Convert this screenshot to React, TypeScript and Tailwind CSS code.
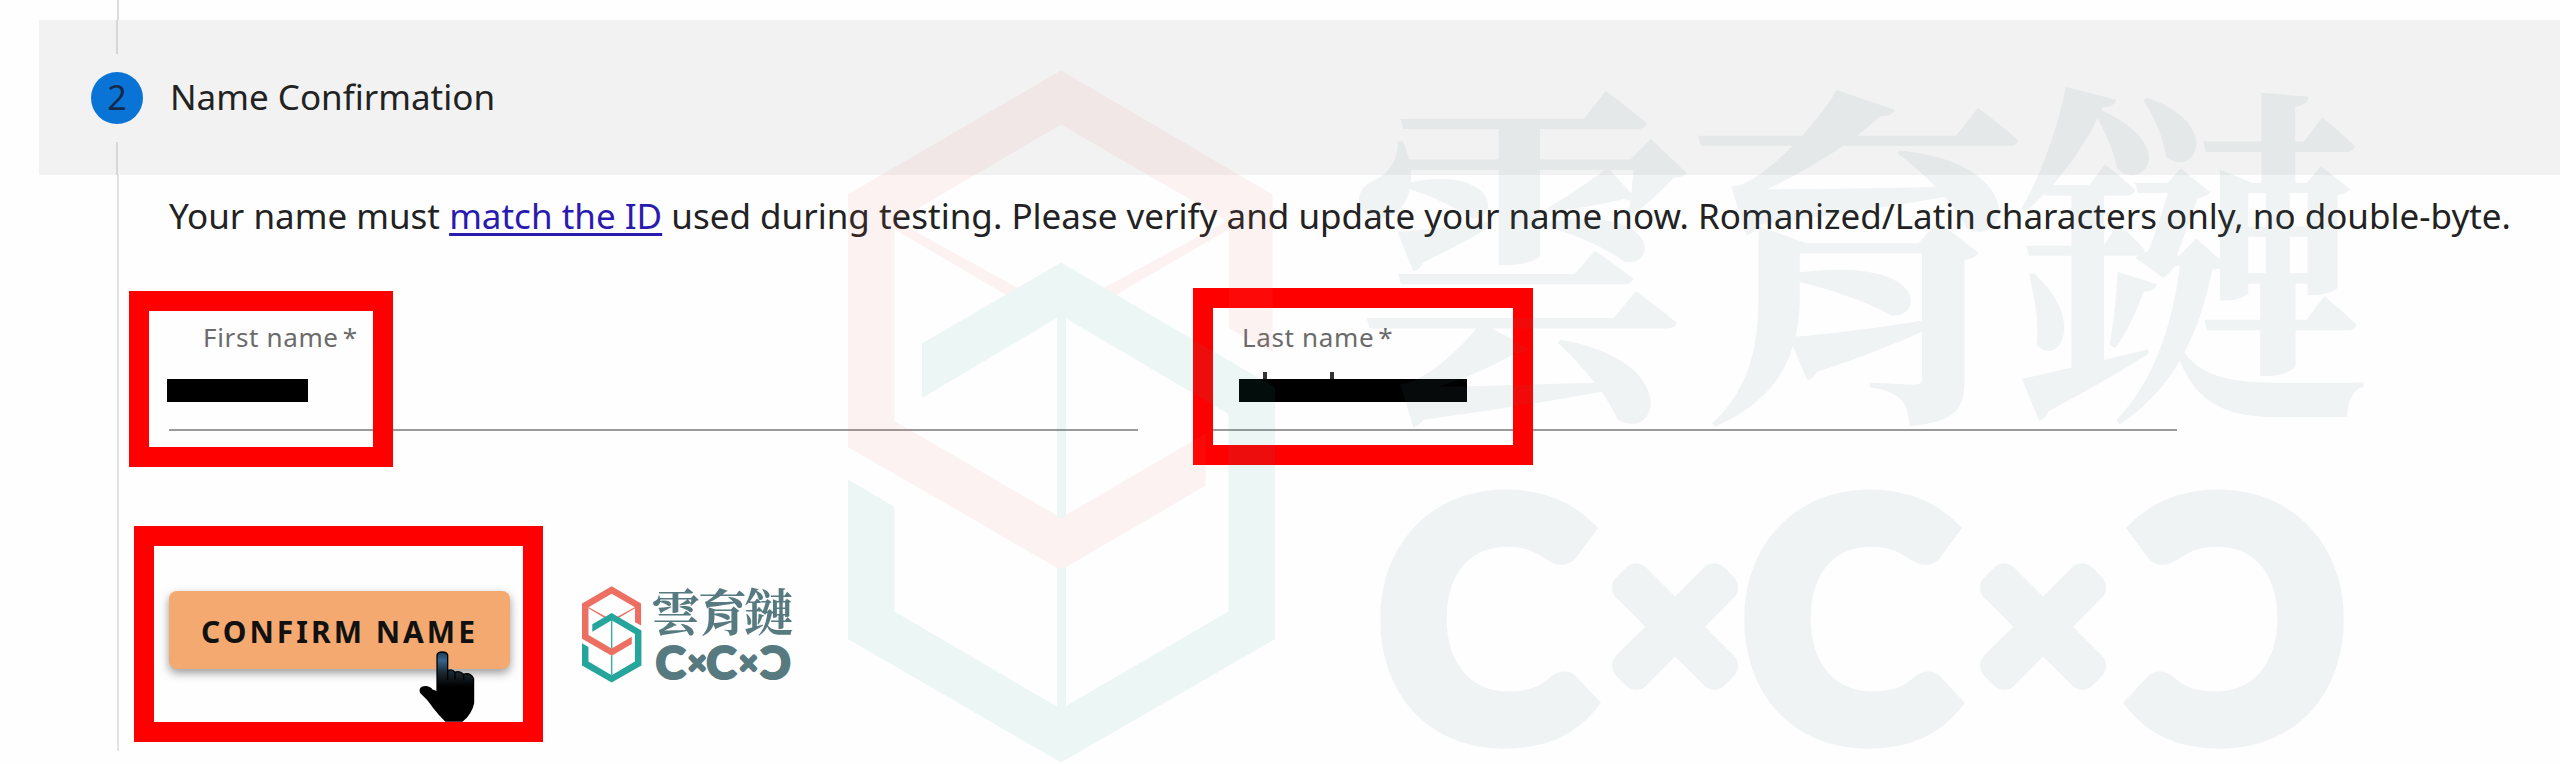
/**
 * NameConfirmationStep: step 2 of the profile stepper.
 *
 * The form sits under a large brand watermark. Red frames call out
 * the fields and the button, black bars redact the entered values.
 */
import type { ReactNode } from 'react';

function BrandLogo({ className }: { className?: string }) {
  return (
    <svg viewBox="848 70 1516 694" className={className} role="img" aria-label="雲育鏈 CxCxC">
      {/* Red ribbon */}
      <g fill="#ec6f62">
        <path d="M1061 70.5 1272.5 194.5V352L1229 328.5V222L1061 124.5 894.4 222V421L1061 518 1205.6 433.5V485.5L1061 570 848 447V194.5Z" />
        <path d="M894 220 1020 289 1008 296 894 229ZM1229 220 1102 289 1114 296 1229 229Z" />
      </g>
      {/* Teal ribbon */}
      <g fill="#25a59c">
        <path d="M922 343.5 1061 262.5 1275 387.5V639L1061 762.5 848 639V479.5L894.4 507V611.5L1061 709 1228.4 611.5V414L1061 315.5 922 398Z" />
        <path d="M1057 312H1066V518H1057ZM1057 568H1066V712H1057Z" />
      </g>
      {/* Word mark */}
      <g fill="#567a80" stroke="#567a80" strokeWidth="0" fontWeight="700">
        <text
          x="1342 1678 2012"
          y="395"
          fontSize="358"
          style={{ fontFamily: '"Noto Serif CJK TC", "Noto Sans CJK TC", serif' }}
        >
          雲育鏈
        </text>
        <g fontSize="328" fontWeight="900" strokeWidth="16" style={{ fontFamily: 'Lato, sans-serif' }}>
          <text x="1377" y="738">C</text>
          <text x="1741" y="738">C</text>
          <text x="-2347" y="738" transform="scale(-1 1)">C</text>
        </g>
        <g
          fontSize="218"
          fontWeight="300"
          textAnchor="middle"
          strokeWidth="29"
          strokeLinejoin="round"
          style={{ fontFamily: 'Inter, sans-serif' }}
        >
          <text x="1675" y="689">×</text>
          <text x="2043" y="689">×</text>
        </g>
      </g>
    </svg>
  );
}

function HandCursor({ className }: { className?: string }) {
  return (
    <svg viewBox="928 422 168 214" className={className} aria-hidden="true">
      <defs>
        <linearGradient id="hand" x1="0" y1="0" x2="0" y2="1">
          <stop offset="0" stopColor="#1c3a54" />
          <stop offset="0.12" stopColor="#35658f" />
          <stop offset="0.3" stopColor="#1a2730" />
          <stop offset="0.5" stopColor="#000" />
        </linearGradient>
      </defs>
      <path
        d="M982 434Q984 425 997 425 1011 425 1014 434V482Q1026 474 1036 486 1050 480 1062 492 1084 486 1092 506V578Q1086 610 1058 633H1008Q990 616 970 590 954 566 933 548 928 536 938 531 956 526 968 540L982 545Z"
        fill="url(#hand)"
        stroke="#000"
        strokeWidth="4"
      />
      <path d="M1014 482V510M1036 486V508M1062 492V510" stroke="#000" strokeWidth="4" />
    </svg>
  );
}

interface NameFieldProps {
  id: string;
  label: string;
  children: ReactNode;
}

function NameField({ id, label, children }: NameFieldProps) {
  return (
    <div className="relative w-[41%] max-w-[969px]">
      <label htmlFor={id} className="block pl-[34px] text-[26px] leading-9 tracking-wide text-[#6b6b6b]">
        {label}
        <span aria-hidden="true" className="ml-1">*</span>
      </label>
      <input
        id={id}
        type="text"
        required
        className="block h-[76px] w-full border-b-2 border-[#9a9a9a] bg-transparent text-4xl outline-none"
      />
      {children}
    </div>
  );
}

export default function App() {
  return (
    <main
      className="relative min-h-screen overflow-hidden bg-[#fefefe] pl-[39px] text-[#222]"
      style={{ fontFamily: '"Noto Sans", sans-serif' }}
    >
      <div className="ml-[78px] h-5 w-0.5 bg-[#dcdcdc]" />

      <header className="flex h-[155px] items-center gap-[27px] bg-[#f2f2f2] pl-[52px]">
        <div className="flex h-full flex-col items-center gap-[18px]">
          <div className="w-0.5 flex-1 bg-[#d6d6d6]" />
          <span className="flex size-[52px] items-center justify-center rounded-full bg-[#0a74d6] text-[34px] text-[#14294a]">
            2
          </span>
          <div className="w-0.5 flex-1 bg-[#d6d6d6]" />
        </div>
        <h2 className="text-[35px]">Name Confirmation</h2>
      </header>

      <section className="ml-[78px] h-[576px] border-l-2 border-[#e2e2e2] pl-[50px]">
        <p className="pt-4 text-[35px] leading-[50px] whitespace-nowrap">
          Your name must{' '}
          <a href="#id" className="text-[#2a1bb0] underline underline-offset-4">
            match the ID
          </a>{' '}
          used during testing. Please verify and update your name now. Romanized/Latin characters only, no double-byte.
        </p>

        <form>
          <div className="mt-[78px] flex gap-[70px]">
            <NameField id="first-name" label="First name">
              <div className="absolute top-[60px] -left-0.5 h-[23px] w-[141px] bg-black" />
              <div className="pointer-events-none absolute -top-7 -left-10 h-44 w-[264px] border-[20px] border-[#ff0000]" />
            </NameField>
            <NameField id="last-name" label="Last name">
              {/* Ascenders left above the redaction bar */}
              <div className="absolute top-[53px] left-[55px] flex h-2 w-[71px] justify-between">
                <span className="w-1 bg-[#333]" />
                <span className="w-1 bg-[#333]" />
              </div>
              <div className="absolute top-[60px] left-[31px] h-[23px] w-[228px] bg-black" />
              <div className="pointer-events-none absolute -top-[31px] -left-[15px] h-[177px] w-[340px] border-[20px] border-[#ff0000]" />
            </NameField>
          </div>

          <div className="mt-[155px] flex items-start gap-[72px]">
            <div className="relative mt-[5px]">
              <button
                type="button"
                className="block h-[78px] w-[341px] rounded-lg bg-[#f4a970] pt-0.5 text-[30px] font-bold tracking-widest text-[#111] shadow-[0_4px_10px_rgba(0,0,0,0.4)]"
              >
                CONFIRM NAME
              </button>
              <div className="pointer-events-none absolute -top-[65px] -left-[35px] h-[216px] w-[409px] border-[20px] border-[#ff0000]" />
              <HandCursor className="pointer-events-none absolute top-[60px] left-[250px] h-[71px] w-14" />
            </div>
            <BrandLogo className="h-[97px] w-[211px]" />
          </div>
        </form>
      </section>

      {/* Watermark over the whole step */}
      <BrandLogo className="pointer-events-none absolute top-[70px] left-[848px] h-[694px] w-[1516px] opacity-8" />
    </main>
  );
}
